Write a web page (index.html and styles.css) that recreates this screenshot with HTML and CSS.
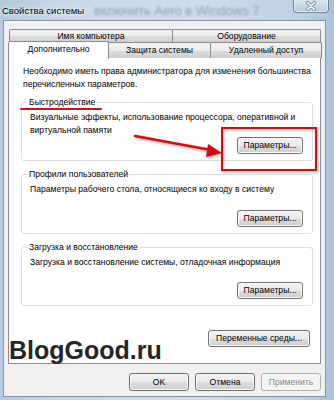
FILE: index.html
```html
<!DOCTYPE html>
<html lang="ru">
<head>
<meta charset="utf-8">
<title>Свойства системы</title>
<link rel="stylesheet" href="styles.css">
</head>
<body>
<div class="window">
  <div class="titlebar">
    <span class="title">Свойства системы</span>
    <span class="ghost">включить Aero в Windows 7</span>
    <div class="close">
      <svg width="16" height="10" viewBox="0 0 16 10">
        <path d="M4.5 1.5 L11.5 8.5 M11.5 1.5 L4.5 8.5" stroke="#7a8898" stroke-width="3.2" stroke-linecap="round"/>
        <path d="M4.5 1.5 L11.5 8.5 M11.5 1.5 L4.5 8.5" stroke="#ffffff" stroke-width="1.6" stroke-linecap="round"/>
      </svg>
    </div>
  </div>
  <div class="body">
    <div class="tabs">
      <div class="tabrow row1">
        <div class="tab t-name">Имя компьютера</div>
        <div class="tab t-hw">Оборудование</div>
      </div>
      <div class="tabrow row2">
        <div class="tab sel t-adv">Дополнительно</div>
        <div class="tab t-prot">Защита системы</div>
        <div class="tab t-remote">Удаленный доступ</div>
      </div>
    </div>
    <div class="panel">
      <p class="intro">Необходимо иметь права администратора для изменения большинства<br>перечисленных параметров.</p>
      <div class="group">
        <span class="gtitle underlined">Быстродействие</span>
        <p class="gtext">Визуальные эффекты, использование процессора, оперативной и<br>виртуальной памяти</p>
        <button class="btn gbtn">Параметры...</button>
      </div>
      <div class="group">
        <span class="gtitle">Профили пользователей</span>
        <p class="gtext">Параметры рабочего стола, относящиеся ко входу в систему</p>
        <button class="btn gbtn">Параметры...</button>
      </div>
      <div class="group">
        <span class="gtitle">Загрузка и восстановление</span>
        <p class="gtext">Загрузка и восстановление системы, отладочная информация</p>
        <button class="btn gbtn">Параметры...</button>
      </div>
      <div class="lastrow">
        <span class="watermark">BlogGood.ru</span>
        <button class="btn envbtn">Переменные среды...</button>
      </div>
    </div>
    <div class="actions">
      <button class="btn abtn">OK</button>
      <button class="btn abtn">Отмена</button>
      <button class="btn abtn disabled">Применить</button>
    </div>
  </div>
  <svg class="annot" width="334" height="400" viewBox="0 0 334 400">
    <defs>
      <filter id="sh" x="-20%" y="-20%" width="140%" height="140%">
        <feDropShadow dx="1" dy="1.5" stdDeviation="1.2" flood-color="#000" flood-opacity="0.35"/>
      </filter>
    </defs>
    <g filter="url(#sh)">
      <rect x="222" y="128" width="94" height="42" fill="none" stroke="#d20d0d" stroke-width="2"/>
      <line x1="135" y1="136" x2="211" y2="150" stroke="#d20d0d" stroke-width="2.6" stroke-linecap="round"/>
      <polygon points="222,153 208,144 206,157" fill="#d20d0d"/>
    </g>
  </svg>
</div>
</body>
</html>
```

FILE: styles.css
```css
html, body {
  margin: 0;
  padding: 0;
}
body {
  width: 334px;
  height: 400px;
  overflow: hidden;
  font-family: "Liberation Sans", Arial, sans-serif;
  font-size: 8.6px;
  color: #000;
}
.window {
  position: relative;
  width: 334px;
  height: 400px;
  background: linear-gradient(90deg, #b4c9de 0%, #c9d8e7 20%, #cfdcea 60%, #bfd1e3 90%, #a9c1da 100%);
  display: flex;
  flex-direction: column;
}
.titlebar {
  height: 20px;
  display: flex;
  align-items: flex-start;
  position: relative;
}
.title {
  margin: 5px 0 0 2px;
  font-size: 9.5px;
  line-height: 11px;
  color: #000;
  text-shadow: 0 0 6px #fff, 0 0 3px #fff;
  white-space: nowrap;
}
.ghost {
  margin: 3px 0 0 10px;
  font-size: 13px;
  line-height: 15px;
  color: #8e9fb2;
  filter: blur(1.3px);
  white-space: nowrap;
}
.close {
  margin-left: auto;
  margin-right: 5px;
  margin-top: -1px;
  width: 36px;
  height: 14px;
  box-sizing: border-box;
  border: 1px solid #74869b;
  border-top: none;
  border-radius: 0 0 4px 4px;
  background: linear-gradient(#dfe8f1, #c8d6e4 55%, #bccbdb);
  box-shadow: inset 0 0 0 1px rgba(255,255,255,0.55);
  display: flex;
  align-items: center;
  justify-content: center;
}
.body {
  margin-left: 3px;
  width: 323px;
  height: 377px;
  box-sizing: border-box;
  background: #f0f0f0;
  border: 1px solid #8496ab;
  padding: 8px 4px 0 4px;
  display: flex;
  flex-direction: column;
}
.tabs {
  display: flex;
  flex-direction: column;
  position: relative;
  z-index: 1;
}
.tabrow {
  display: flex;
}
.row1 {
  height: 13px;
  margin-left: 1px;
}
.row2 {
  height: 16px;
}
.tab {
  box-sizing: border-box;
  border: 1px solid #898c95;
  border-bottom: none;
  border-radius: 2px 2px 0 0;
  background: linear-gradient(#f2f2f2 0%, #ebebeb 50%, #dddddd 51%, #cfcfcf 100%);
  text-align: center;
  white-space: nowrap;
  line-height: 12px;
  margin-right: -1px;
}
.row1 .tab { height: 13px; }
.row2 .tab { height: 16px; line-height: 14px; }
.t-name { width: 164px; }
.t-hw { width: 149px; }
.t-adv { width: 101px; }
.t-prot { width: 103px; }
.t-remote { width: 112px; }
.row2 .tab.sel {
  background: #fff;
  height: 18px;
  margin-top: -1px;
  position: relative;
  z-index: 2;
}
.panel {
  margin-top: -1px;
  width: 313px;
  height: 307px;
  box-sizing: border-box;
  background: #fff;
  border: 1px solid #898c95;
  padding: 7px 7px 0 12px;
  display: flex;
  flex-direction: column;
}
.intro {
  margin: 0 0 11px 2px;
  line-height: 13px;
  white-space: nowrap;
}
.group {
  height: 62px;
  box-sizing: border-box;
  border: 1px solid #d5dfe5;
  border-radius: 3px;
  display: flex;
  flex-direction: column;
  padding: 0 9px 6px 6px;
  margin-bottom: 13px;
}
.gtitle {
  align-self: flex-start;
  margin-top: -6px;
  padding: 0 1px;
  background: #fff;
  line-height: 11px;
  white-space: nowrap;
  position: relative;
}
.underlined::after {
  content: "";
  position: absolute;
  left: -8px;
  right: -6px;
  top: 11px;
  height: 2px;
  background: #c8141a;
  border-radius: 1px;
}
.gtext {
  margin: 3px 0 0 2px;
  line-height: 13px;
  white-space: nowrap;
}
.btn {
  font-family: "Liberation Sans", Arial, sans-serif;
  font-size: 8.6px;
  color: #000;
  height: 17px;
  box-sizing: border-box;
  border: 1px solid #707070;
  border-radius: 3px;
  background: linear-gradient(#f2f2f2 0%, #ebebeb 50%, #dddddd 51%, #cfcfcf 100%);
  box-shadow: inset 0 0 0 1px #fbfbfb;
  padding: 0;
  line-height: 15px;
  white-space: nowrap;
}
.gbtn {
  width: 66px;
  align-self: flex-end;
  margin-top: auto;
}
.lastrow {
  display: flex;
  justify-content: space-between;
  align-items: flex-start;
  margin-top: -1px;
}
.watermark {
  margin: 20px 0 0 -12px;
  font-family: "Liberation Sans", Arial, sans-serif;
  font-weight: bold;
  font-size: 25px;
  line-height: 25px;
  color: #262626;
}
.envbtn {
  width: 102px;
  margin: 12px 3px 0 0;
}
.actions {
  display: flex;
  justify-content: flex-end;
  gap: 6px;
  margin-top: 9px;
}
.abtn {
  width: 60px;
  height: 18px;
}
.abtn.disabled {
  color: #8a8a8a;
  border-color: #adb2b5;
  background: #f4f4f4;
  box-shadow: none;
}
.annot {
  position: absolute;
  left: 0;
  top: 0;
  pointer-events: none;
}
```
